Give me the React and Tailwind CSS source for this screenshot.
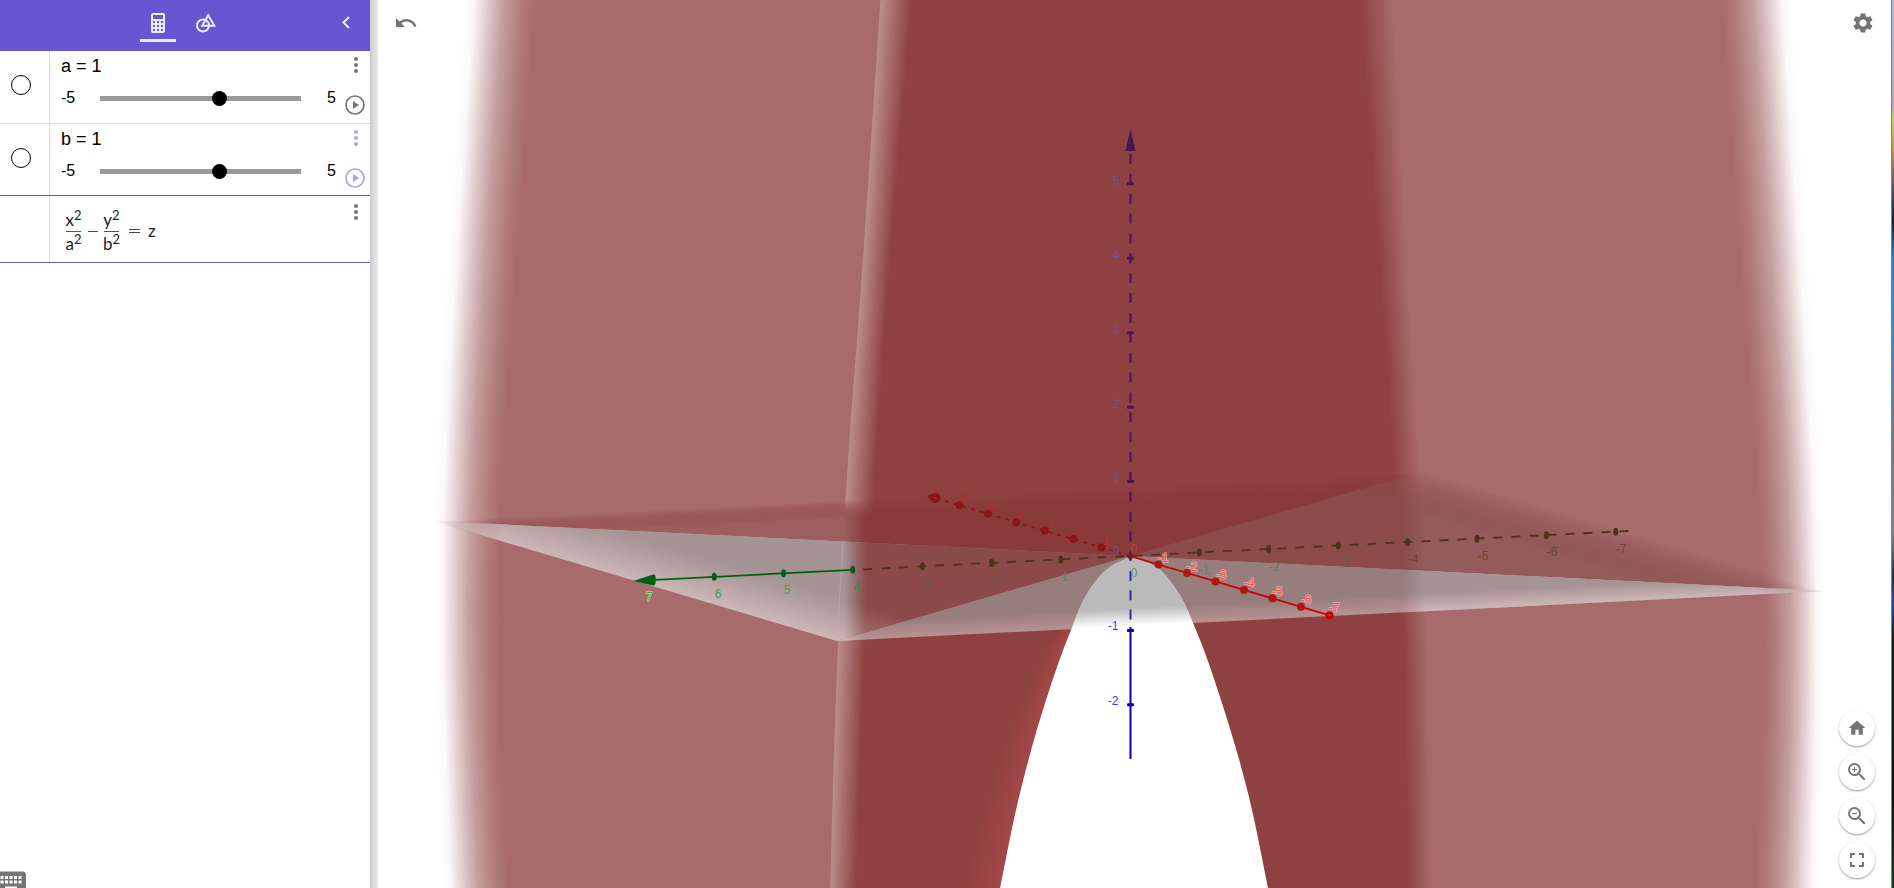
import React from "react";
import { MdUndo, MdSettings, MdHome, MdZoomIn, MdZoomOut, MdFullscreen, MdKeyboard } from "react-icons/md";

/* ---------- 3D scene helpers ---------- */

const YS = [-10, 300, 460, 620, 750, 898];
const OUTER_L = [463, 442, 434, 432, 435, 440];
const INNER_L = [536, 514, 503, 498, 501, 508];
const OUTER_R = [1793, 1814, 1823, 1827, 1826, 1822];
const INNER_R = [1721, 1743, 1756, 1763, 1761, 1755];
const FOLD_L = [881, 860, 848, 839, 834, 830];
const DARK_L = [913, 887, 876, 866, 861, 856];
const DARK_R = [1359, 1382, 1393, 1402, 1406, 1408];
const LIGHT_R = [1393, 1410, 1420, 1427, 1430, 1433];

const mix = (a, b, t) => a.map((v, i) => v + (b[i] - v) * t);
const rgb = (c) => `rgb(${c.map((v) => Math.round(v)).join(",")})`;

/* Smooth curve through the points, with tangents scaled by chord length */
function spline(pts) {
  const len = [0];
  for (let i = 1; i < pts.length; i++) {
    len.push(len[i - 1] + Math.hypot(pts[i][0] - pts[i - 1][0], pts[i][1] - pts[i - 1][1]));
  }
  const slope = pts.map((_, i) => {
    const a = Math.max(i - 1, 0);
    const b = Math.min(i + 1, pts.length - 1);
    const whole = [0, 1].map((k) => (pts[b][k] - pts[a][k]) / (len[b] - len[a]));
    if (a === i || b === i) return whole;
    const h0 = len[i] - len[a];
    const h1 = len[b] - len[i];
    return [0, 1].map((k) => ((pts[i][k] - pts[a][k]) / h0) * (h1 / (h0 + h1)) + ((pts[b][k] - pts[i][k]) / h1) * (h0 / (h0 + h1)));
  });
  let d = "";
  for (let i = 0; i < pts.length - 1; i++) {
    const h = (len[i + 1] - len[i]) / 3;
    const [p, q, m, n] = [pts[i], pts[i + 1], slope[i], slope[i + 1]];
    d += `C${p[0] + m[0] * h} ${p[1] + m[1] * h} ${q[0] - n[0] * h} ${q[1] - n[1] * h} ${q[0]} ${q[1]}`;
  }
  return d;
}

const column = (xs) => xs.map((x, i) => [x, YS[i]]);

function band(left, right) {
  const l = column(left);
  const r = column(right).reverse();
  return `M${l[0][0]} ${l[0][1]}${spline(l)}L${r[0][0]} ${r[0][1]}${spline(r)}Z`;
}

const flat = (x) => YS.map(() => x);

function ramp(stops, t) {
  for (let i = 1; i < stops.length; i++) {
    if (t <= stops[i][0]) {
      const [t0, v0] = stops[i - 1];
      const [t1, v1] = stops[i];
      return v0 + ((v1 - v0) * (t - t0)) / (t1 - t0);
    }
  }
  return 1;
}

const steps = (n) => Array.from({ length: n }, (_, i) => (i + 1) / n);

const WHITE = [255, 255, 255];
const ROSE = [167, 107, 107];
const FOLD = [187, 139, 139];
const DARK = [142, 65, 65];
const GLOW = [161, 71, 71];
const FADE = [[0, 0], [0.15, 0.05], [0.35, 0.36], [0.55, 0.65], [0.8, 0.88], [1, 1]];

const ARCH_L = [[1130, 557], [1110, 567], [1087, 594], [1071, 630], [1046, 700], [1019, 797], [999, 893]];
const ARCH_R = [[1130, 557], [1156, 567], [1179, 594], [1196, 630], [1221, 700], [1249, 797], [1269, 893]];
const ARCH = (() => {
  const r = [...ARCH_R].reverse();
  return `M1130 557${spline(ARCH_L)}L${r[0][0]} ${r[0][1]}${spline(r)}Z`;
})();

function glowPath(t) {
  const edge = ARCH_L.slice(2);
  const widths = [0, 14, 26, 34, 38];
  const out = edge.map(([x, y], i) => [x - widths[i] * (1 - t), y]).reverse();
  return `M${edge[0][0]} ${edge[0][1]}${spline(edge)}L${out[0][0]} ${out[0][1]}${spline(out)}Z`;
}

/* Ground plane: a parallelogram centred on the origin */
const O = [1130, 556];
const L = [434, 521];
const F = [837, 641];
const R = [1826, 591];
const B = [1423, 471];
const poly = (...p) => p.map((q) => q.join(",")).join(" ");
const shrink = (s) => poly(...[L, F, R, B].map((p) => [O[0] + (p[0] - O[0]) * s, O[1] + (p[1] - O[1]) * s]));

const T1 = poly(L, O, F);
const T2 = poly(F, O, R);
const T3 = poly(O, R, B);
const T4 = poly(L, O, B);

function Surface() {
  return (
    <g>
      {steps(40).map((t) => (
        <path
          key={t}
          d={band(OUTER_L.map((x, i) => x + (INNER_L[i] - x) * t), OUTER_R.map((x, i) => x + (INNER_R[i] - x) * t))}
          fill={rgb(mix(WHITE, ROSE, ramp(FADE, t)))}
        />
      ))}
      <path d={band(FOLD_L, flat(1131))} fill={rgb(FOLD)} />
      {steps(20).map((t) => (
        <path key={t} d={band(FOLD_L.map((x, i) => x + (DARK_L[i] - x) * t), flat(1131))} fill={rgb(mix(FOLD, DARK, t))} />
      ))}
      {steps(20).map((t) => (
        <path key={t} d={band(flat(1130), LIGHT_R.map((x, i) => x + (DARK_R[i] - x) * t))} fill={rgb(mix(ROSE, DARK, t))} />
      ))}
      {steps(16).map((t) => (
        <path key={t} d={glowPath(t * 0.9)} fill={rgb(mix(DARK, GLOW, t))} />
      ))}
    </g>
  );
}

function Plane() {
  return (
    <g mask="url(#tips)">
      <g mask="url(#inset)">
        <polygon points={T3} fill="rgb(139,75,75)" />
        <polygon points={T4} fill="rgb(137,59,59)" />
      </g>
      <polygon points={T1} fill="rgb(168,120,120)" />
      <polygon points={T2} fill="rgb(184,146,146)" />
      <g mask="url(#inset)">
        <polygon points={T1} fill="rgb(139,74,74)" />
        <polygon points={T2} fill="rgb(152,125,125)" />
      </g>
      <g mask="url(#sides)">
        <g mask="url(#inset)">
          <polygon points={T3} fill="rgb(147,91,91)" />
          <polygon points={T4} fill="rgb(157,94,94)" />
        </g>
        <polygon points={T1} fill="rgb(205,182,182)" />
        <polygon points={T2} fill="rgb(205,182,182)" />
        <g mask="url(#inset)">
          <polygon points={T1} fill="rgb(164,148,147)" />
          <polygon points={T2} fill="rgb(165,148,147)" />
        </g>
      </g>
      <path d="M843 542L837 641" stroke="#c9b0b0" strokeOpacity="0.5" />
    </g>
  );
}

const LABEL = { fontFamily: '"Liberation Sans", Arial, sans-serif', fontSize: 12, textAnchor: "middle" };

function Labels({ items }) {
  return items.map(([text, x, y, fill, halo]) => (
    <text key={`${text}-${x}`} {...LABEL} x={x} y={y + 4} fill={fill} stroke={halo} strokeWidth={halo ? 1 : 0} paintOrder="stroke">
      {text}
    </text>
  ));
}

const PURPLE = "#4b1456";
const Z_LABELS = [
  ["5", 1116, 181, "#7a4a9c"], ["4", 1116, 255, "#7a4a9c"], ["3", 1116, 330, "#7a4a9c"], ["2", 1116, 404, "#7a4a9c"],
  ["1", 1116, 478, "#7a4a9c"], ["0", 1116, 551, "#7a4a9c"], ["-1", 1113, 626, "#4444ee"], ["-2", 1113, 701, "#3838e6"],
];
const X_LABELS = [
  ["7", 936, 490, "#ae2c32"], ["6", 964, 498, "#ae2c32"], ["5", 992, 507, "#ae2c32"], ["4", 1020, 515, "#ae2c32"],
  ["3", 1049, 524, "#ae2c32"], ["2", 1078, 532, "#ae2c32"], ["1", 1106, 541, "#b23034"], ["0", 1134, 549, "#b84340"],
  ["-1", 1163, 558, "#ff4a4a", "#f5c0c0"], ["-2", 1192, 567, "#ff4a4a", "#f5c0c0"], ["-3", 1221, 575, "#ff4a4a", "#f5c0c0"],
  ["-4", 1249, 583, "#ff4a4a", "#f5c0c0"], ["-5", 1277, 592, "#ff4a4a", "#f5c0c0"], ["-6", 1306, 600, "#ff4a4a", "#f5c0c0"],
  ["-7", 1334, 608, "#ff4a4a", "#f5c0c0"],
];
const Y_LABELS = [
  ["7", 649, 597, "#3fa552", "#cdebd0"], ["6", 718, 594, "#4c9a5c"], ["5", 787, 590, "#4c9a5c"], ["4", 857, 587, "#45844a"],
  ["3", 926, 584, "#665c3c"], ["2", 996, 580, "#665c3c"], ["1", 1065, 577, "#5f8058"], ["0", 1134, 573, "#5f9866"],
  ["-1", 1204, 570, "#5f8058"], ["-2", 1274, 567, "#5f8058"], ["-3", 1344, 563, "#665c3c"], ["-4", 1413, 559, "#6c4632"],
  ["-5", 1483, 556, "#6c4632"], ["-6", 1552, 552, "#6c4632"], ["-7", 1621, 549, "#6c4632"],
];

function Axes() {
  const units = [1, 2, 3, 4, 5, 6, 7];
  const olive = "#4e3214";
  return (
    <g>
      {/* z axis */}
      <path d="M1130.5 154V557" stroke={PURPLE} strokeWidth="2" strokeDasharray="10 9.87" />
      <path d="M1130.5 571V622" stroke="#2d2db0" strokeWidth="2" strokeDasharray="10 9.2" />
      <path d="M1130.5 557V561" stroke="#2d2db0" strokeWidth="2" />
      <path d="M1130.5 627V759" stroke="#0000b4" strokeWidth="2" />
      <path d="M1130.5 129L1135.5 151H1125.5Z" fill={PURPLE} />
      {[183.7, 258.3, 332.7, 407.2, 481.6].map((y) => (
        <rect key={y} x="1127" y={y - 1.5} width="7" height="3" rx="1" fill={PURPLE} />
      ))}
      {[630.5, 704.7].map((y) => (
        <rect key={y} x="1127" y={y - 1.5} width="7" height="3" rx="1" fill="#0000b4" />
      ))}

      {/* y axis */}
      <path d="M1628.5 531L853 569.8" stroke={olive} strokeWidth="1.8" strokeDasharray="9 9.03" />
      <path d="M853 569.8L655 579.8" stroke="#006010" strokeWidth="1.8" />
      <path d="M633.5 581L653 574.6Q656 574 655.6 580Q656 586 653 585.4Z" fill="#006010" />
      {units.map((n) => (
        <ellipse key={n} cx={1130 + n * 69.4} cy={556 - n * 3.46} rx="2.5" ry="4" fill={olive} />
      ))}
      {[1, 2, 3].map((n) => (
        <ellipse key={n} cx={1130 - n * 69.2} cy={556 + n * 3.45} rx="2.5" ry="4" fill={olive} />
      ))}
      {[4, 5, 6].map((n) => (
        <ellipse key={n} cx={1130 - n * 69.3} cy={556 + n * 3.45} rx="2.5" ry="4" fill="#0b5a18" />
      ))}

      {/* x axis */}
      <path d="M1130 556L935 498" stroke="#8c1519" strokeWidth="1.8" strokeDasharray="4 5" />
      {[1, 2, 3, 4, 5, 6].map((n) => (
        <circle key={n} cx={1130 - n * 28.4} cy={556 - n * 8.46} r="4" fill="#8c1519" />
      ))}
      <path d="M927 496L935 493A5 5 0 1 1 932 501.500Z" fill="#8c1519" />
      <circle cx="935" cy="498" r="1" fill="#a04040" />
      <Labels items={Y_LABELS} />
      <path d="M1130 556L1329.500 615.300" stroke="#cd0000" strokeWidth="1.8" />
      {units.map((n) => (
        <circle key={n} cx={1130 + n * 28.5} cy={556 + n * 8.47} r="4" fill={n === 7 ? "#c40000" : "#b41414"} />
      ))}
      <circle cx="1329.500" cy="615" r="1" fill="#f04040" />
      <path d="M1130.500 552.500L1134.500 556.500L1130.500 560.500L1126.500 556.500Z" fill="#702028" />
      <Labels items={Z_LABELS} />
      <Labels items={X_LABELS} />
    </g>
  );
}

function Scene() {
  return (
    <svg
      className="block h-full w-full"
      viewBox="378 0 1513 888"
      preserveAspectRatio="xMidYMid slice"
      role="img"
      aria-label="3D view of the hyperbolic paraboloid"
    >
      <defs>
        <mask id="inset" maskUnits="userSpaceOnUse" x="378" y="400" width="1513" height="300">
          {steps(24).map((t) => (
            <polygon key={t} points={shrink(1 - t * 0.25)} fill={rgb([255 * t, 255 * t, 255 * t])} />
          ))}
        </mask>
        <linearGradient id="tipRamp" gradientUnits="userSpaceOnUse" x1="434" x2="1830" y1="0" y2="0">
          <stop offset="0" stopColor="#000" />
          <stop offset="0.015" stopColor="#777" />
          <stop offset="0.05" stopColor="#fff" />
          <stop offset="0.95" stopColor="#fff" />
          <stop offset="0.985" stopColor="#777" />
          <stop offset="1" stopColor="#000" />
        </linearGradient>
        <mask id="tips" maskUnits="userSpaceOnUse" x="378" y="400" width="1513" height="300">
          <rect x="378" y="400" width="1513" height="300" fill="url(#tipRamp)" />
        </mask>
        <linearGradient id="sideRamp" gradientUnits="userSpaceOnUse" x1="800" x2="1500" y1="0" y2="0">
          <stop offset="0.063" stopColor="#fff" />
          <stop offset="0.094" stopColor="#000" />
          <stop offset="0.859" stopColor="#000" />
          <stop offset="0.893" stopColor="#fff" />
        </linearGradient>
        <mask id="sides" maskUnits="userSpaceOnUse" x="378" y="400" width="1513" height="300">
          <rect x="378" y="400" width="1513" height="300" fill="url(#sideRamp)" />
        </mask>
        <clipPath id="arch">
          <path d={ARCH} />
        </clipPath>
      </defs>
      <Surface />
      <Plane />
      <g clipPath="url(#arch)">
        <rect x="990" y="550" width="290" height="350" fill="#fff" />
        <g mask="url(#inset)">
          <polygon points={poly(L, F, R, B)} fill="rgb(186,186,186)" />
        </g>
      </g>
      <Axes />
    </svg>
  );
}

/* ---------- Sidebar ---------- */

function CalculatorIcon() {
  return (
    <svg width="14" height="20" viewBox="0 0 14 20" fill="none">
      <rect x="1" y="1" width="12" height="18" rx="1" stroke="currentColor" strokeWidth="2" />
      <path d="M1 7H13" stroke="currentColor" strokeWidth="2" />
      <path d="M5 7V19M9 7V19M1 11H13M1 15H13" stroke="currentColor" strokeWidth="2" />
    </svg>
  );
}

function ShapesIcon() {
  return (
    <svg width="20" height="20" viewBox="0 0 20 20" fill="none" stroke="currentColor" strokeWidth="2">
      <circle cx="7" cy="12.500" r="6" />
      <path d="M12.200 2.200L18.300 12.800H6.200Z" />
    </svg>
  );
}

function Kebab() {
  return (
    <svg width="4" height="16" viewBox="0 0 4 16" fill="currentColor">
      <circle cx="2" cy="2" r="2" />
      <circle cx="2" cy="8" r="2" />
      <circle cx="2" cy="14" r="2" />
    </svg>
  );
}

function PlayIcon() {
  return (
    <svg width="20" height="20" viewBox="0 0 20 20" fill="none">
      <circle cx="10" cy="10" r="9" stroke="currentColor" strokeWidth="1.700" />
      <path d="M8 6V14L14 10Z" fill="currentColor" />
    </svg>
  );
}

function SliderRow({ name, tone, frame }) {
  return (
    <li className={`flex border-b ${frame}`}>
      <div className="w-[50px] shrink-0 border-r border-[#dcdcdc] pl-[11px] pt-6">
        <button aria-label={`Show ${name}`} className="block size-5 rounded-full border border-black bg-white" />
      </div>
      <div className="min-w-0 flex-1 pl-[11px] text-black">
        <div className="pt-[3px] text-[18px] leading-6">{name} = 1</div>
        <div className="flex items-center pt-2 text-[16px] leading-6">
          <span className="w-[39px]">-5</span>
          <input
            type="range"
            min="-5"
            max="5"
            defaultValue="1"
            aria-label={name}
            className="h-[5px] min-w-0 flex-1 appearance-none bg-[#999] [&::-webkit-slider-thumb]:size-[15px] [&::-webkit-slider-thumb]:appearance-none [&::-webkit-slider-thumb]:rounded-full [&::-webkit-slider-thumb]:bg-black"
          />
          <span className="w-[39px] pr-1 text-right">5</span>
        </div>
      </div>
      <div className={`flex w-[30px] shrink-0 flex-col items-center pt-[6px] ${tone}`}>
        <button aria-label={`Options for ${name}`} className="pl-[2px]">
          <Kebab />
        </button>
        <button aria-label={`Animate ${name}`} className="mt-[22px]">
          <PlayIcon />
        </button>
      </div>
    </li>
  );
}

function Term({ base }) {
  return (
    <span className="flex h-[23px] leading-6">
      {base}
      <span className="text-[13px] leading-[15px]">2</span>
    </span>
  );
}

function Fraction({ top, bottom }) {
  return (
    <span className="flex w-[15px] flex-col items-center">
      <Term base={top} />
      <span className="h-px w-full bg-[#555]" />
      <Term base={bottom} />
    </span>
  );
}

function Sidebar() {
  return (
    <aside className="flex w-[370px] shrink-0 flex-col bg-white">
      <header className="grid h-[51px] shrink-0 grid-cols-[1fr_auto_1fr] bg-[#6557d2] text-[#eceaf9]">
        <span />
        <nav className="flex gap-3 pr-[6px]">
          <button aria-label="Algebra" className="flex w-9 flex-col items-center pt-[13px]">
            <CalculatorIcon />
            <span className="mt-[6px] h-[3px] w-9 bg-[#eceaf9]" />
          </button>
          <button aria-label="Tools" className="flex w-9 flex-col items-center pt-[13px]">
            <ShapesIcon />
          </button>
        </nav>
        <button aria-label="Collapse" className="mr-5 mt-4 h-[13px] justify-self-end">
          <svg width="8" height="13" viewBox="0 0 8 13" fill="none" stroke="currentColor" strokeWidth="2">
            <path d="M7 1L1.500 6.500L7 12" />
          </svg>
        </button>
      </header>
      <ul className="shrink-0">
        <SliderRow name="a" tone="text-[#757575]" frame="h-[73px] border-[#dcdcdc]" />
        <SliderRow name="b" tone="text-[#aea3ea]" frame="h-[72px] border-[#6557d2]" />
        <li className="flex h-[67px] border-b border-[#6557d2]">
          <div className="w-[50px] shrink-0 border-r border-[#dcdcdc]" />
          <div className="flex flex-1 items-center pl-4 pt-1 text-[17px] text-[#222] [font-family:Lato,sans-serif]">
            <Fraction top="x" bottom="a" />
            <span className="ml-[7px] h-px w-[10px] bg-[#444]" />
            <span className="w-[6px]" />
            <Fraction top="y" bottom="b" />
            <span className="ml-[10px] h-1 w-[11px] border-y border-[#444]" />
            <span className="ml-2 leading-4">z</span>
          </div>
          <div className="flex w-[30px] shrink-0 flex-col items-center pt-2 text-[#757575]">
            <button aria-label="Options for equation" className="pl-[2px]">
              <Kebab />
            </button>
          </div>
        </li>
      </ul>
      <div className="mt-auto h-6 shrink-0 overflow-hidden">
        <button aria-label="Keyboard" className="-ml-[7px] block text-[#757575]">
          <MdKeyboard size={36} />
        </button>
      </div>
    </aside>
  );
}

/* ---------- Graphics view ---------- */

function RoundButton({ label, children }) {
  return (
    <button
      aria-label={label}
      className="flex size-9 items-center justify-center rounded-full bg-white text-[#757575] shadow-[0_1px_2px_rgba(0,0,0,0.4)]"
    >
      {children}
    </button>
  );
}

export default function App() {
  return (
    <div className="flex h-screen overflow-hidden bg-white [font-family:'Liberation_Sans',Arial,sans-serif]">
      <Sidebar />
      <div className="w-2 shrink-0 bg-linear-to-r from-[#cbcbcb] to-[#ebebeb]" />
      <main className="relative min-w-0 flex-1">
        <Scene />
        <button aria-label="Undo" className="absolute left-4 top-[11px] text-[#757575]">
          <MdUndo size={24} />
        </button>
        <button aria-label="Settings" className="absolute right-4 top-[11px] text-[#757575]">
          <MdSettings size={24} />
        </button>
        <div className="absolute bottom-[10px] right-4 flex flex-col gap-2">
          <RoundButton label="Home">
            <MdHome size={20} />
          </RoundButton>
          <RoundButton label="Zoom in">
            <MdZoomIn size={24} />
          </RoundButton>
          <RoundButton label="Zoom out">
            <MdZoomOut size={24} />
          </RoundButton>
          <RoundButton label="Full screen">
            <MdFullscreen size={24} />
          </RoundButton>
        </div>
      </main>
      <div className="w-[3px] shrink-0 border-l border-[#3490e0] bg-[linear-gradient(#a9bbe0_0%,#b5a5c0_12%,#c8d060_13.5%,#c89050_17%,#404868_22%,#102040_25%,#3080c8_29%,#3888d0_34%,#707888_50%,#808490_60%,#203050_65%,#2050a8_68%,#0a2018_72%,#0c1410_90%,#104020_100%)]" />
    </div>
  );
}
